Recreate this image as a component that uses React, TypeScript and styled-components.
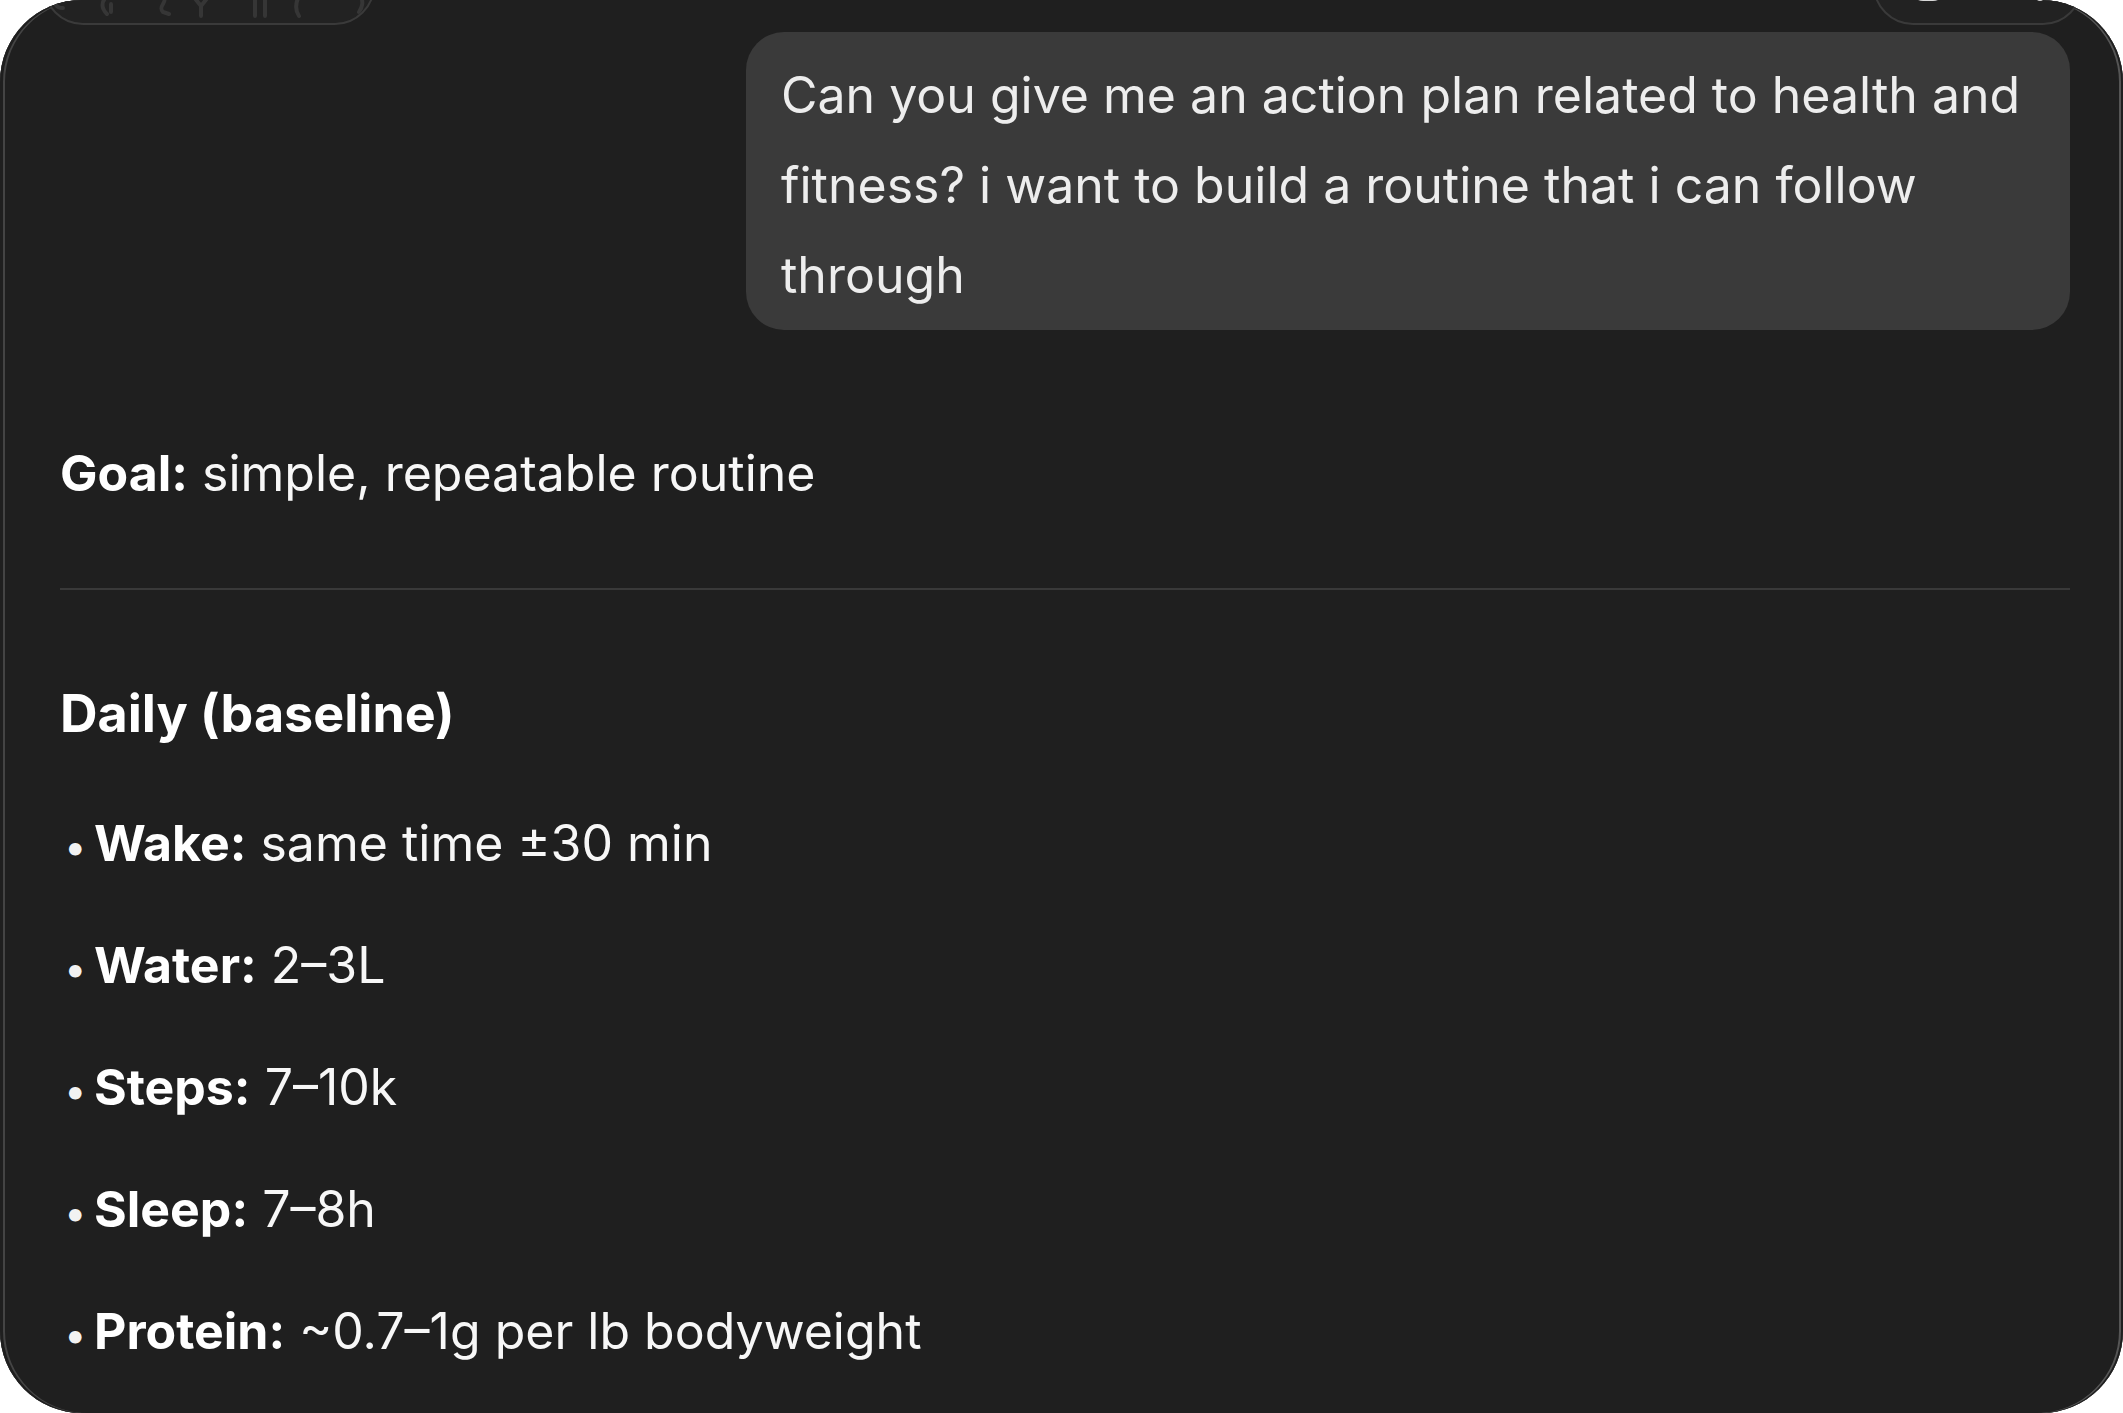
import React from "react";
import styled, { createGlobalStyle } from "styled-components";

const GlobalStyle = createGlobalStyle`
  html, body { margin: 0; padding: 0; background: #ffffff; }
  body { font-family: "Inter", "Liberation Sans", sans-serif; -webkit-font-smoothing: antialiased; }
  * { box-sizing: border-box; }
`;

const FONT = 50;

const Frame = styled.div`
  position: relative;
  width: 2123px;
  height: 1413px;
  background: #1f1f1f;
  border-radius: 82px;
  overflow: hidden;
  box-shadow: inset 3px 0 0 #1f1f1f, inset 5px 0 0 #444444,
    inset -2px 0 0 #1f1f1f, inset -4px 0 0 #555555;
`;

const Column = styled.div`
  display: flex;
  flex-direction: column;
  padding: 32px 53px 0 60px;
  color: #f7f7f7;
  font-size: ${FONT}px;
  line-height: 90px;
`;

const UserRow = styled.div`
  display: flex;
  justify-content: flex-end;
`;

const Bubble = styled.div`
  max-width: 1324px;
  background: #3a3a3a;
  color: #ededed;
  border-radius: 38px;
  padding: 18px 35px 10px 35px;
`;

const Paragraph = styled.p<{ $top: number }>`
  margin: ${(p) => p.$top}px 0 0 0;
`;

const Strong = styled.strong`
  font-weight: 700;
  color: #ffffff;
`;

const Divider = styled.hr`
  margin: 70px 0 0 0;
  border: none;
  height: 2px;
  background: #393939;
`;

const Heading = styled.h3`
  margin: 79px 0 0 0;
  font-size: ${FONT * 1.04}px;
  line-height: 90px;
  font-weight: 700;
  color: #ffffff;
`;

const List = styled.ul`
  list-style: none;
  margin: 39px 0 0 0;
  padding: 0;
  display: flex;
  flex-direction: column;
  gap: 32px;
`;

const Item = styled.li`
  display: flex;
  align-items: baseline;
`;

const Dot = styled.span`
  display: inline-block;
  width: 34px;
  padding-left: 4px;
  font-size: 40px;
  line-height: 1;
  font-weight: 400;
  color: #f2f2f2;
`;

const TopPill = styled.div<{ $left: number; $width: number }>`
  position: absolute;
  top: -56px;
  left: ${(p) => p.$left}px;
  width: ${(p) => p.$width}px;
  height: 81px;
  border-radius: 40px;
  background: #222222;
  border: 2px solid #3a3a3a;
  display: flex;
  align-items: flex-end;
  overflow: hidden;
`;

const GhostIcons = styled.svg`
  display: block;
  margin-bottom: 3px;
`;

const MarkRow = styled.div`
  display: flex;
  align-items: flex-end;
  gap: 90px;
  padding: 0 0 22px 36px;
`;

const WhiteMark = styled.span<{ $w: number }>`
  display: block;
  width: ${(p) => p.$w}px;
  height: 40px;
  border-radius: 12px;
  background: #d8d8d8;
`;

const items = [
  { label: "Wake:", text: "same time ±30 min" },
  { label: "Water:", text: "2–3L" },
  { label: "Steps:", text: "7–10k" },
  { label: "Sleep:", text: "7–8h" },
  { label: "Protein:", text: "~0.7–1g per lb bodyweight" },
];

export default function App() {
  return (
    <>
      <GlobalStyle />
      <Frame>
        <TopPill $left={43} $width={332}>
          <GhostIcons width="328" height="24" viewBox="0 0 328 24" fill="none" stroke="#363636" strokeWidth="4" strokeLinecap="round">
            <path d="M12 0 C8 6 10 12 18 12" />
            <path d="M62 0 C56 6 56 12 62 18 M66 8 L66 16" />
            <path d="M118 0 C124 6 112 10 118 16 L124 18" />
            <path d="M148 0 L156 10 L164 0 M156 10 L156 20" />
            <path d="M210 0 L210 20 M220 0 L220 20" />
            <path d="M254 0 C250 8 250 14 254 20" />
            <path d="M316 0 C318 6 318 10 314 16" />
          </GhostIcons>
        </TopPill>
        <TopPill $left={1873} $width={210}>
          <MarkRow>
            <WhiteMark $w={34} />
            <WhiteMark $w={10} />
          </MarkRow>
        </TopPill>
        <Column>
          <UserRow>
            <Bubble>
              Can you give me an action plan related to health and fitness? i want to build a routine that i can follow through
            </Bubble>
          </UserRow>
          <Paragraph $top={98}>
            <Strong>Goal:</Strong> simple, repeatable routine
          </Paragraph>
          <Divider />
          <Heading>Daily (baseline)</Heading>
          <List>
            {items.map((it) => (
              <Item key={it.label}>
                <Dot>•</Dot>
                <span>
                  <Strong>{it.label}</Strong> {it.text}
                </span>
              </Item>
            ))}
          </List>
        </Column>
      </Frame>
    </>
  );
}
